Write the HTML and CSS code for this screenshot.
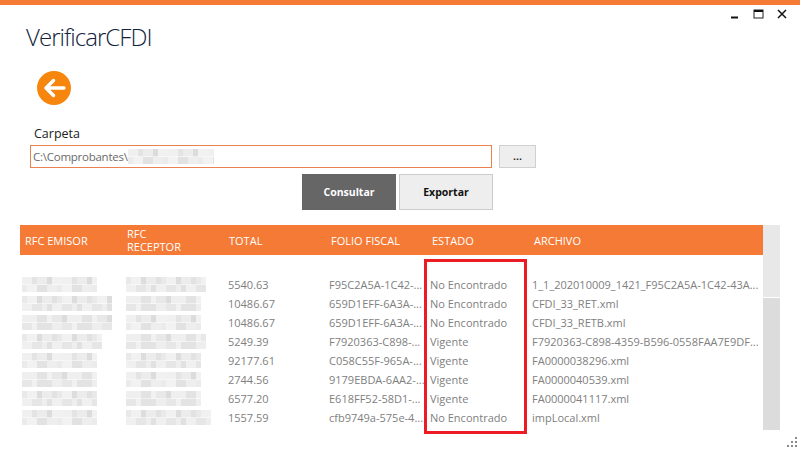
FILE: index.html
```html
<!DOCTYPE html>
<html lang="es">
<head>
<meta charset="utf-8">
<title>VerificarCFDI</title>
<link rel="stylesheet" href="styles.css">
</head>
<body>
<div class="window">
  <div class="topbar"></div>
  <div class="controls">
    <svg class="ctl" width="10" height="10" viewBox="0 0 10 10"><path d="M1 8.500h7" stroke="#111" stroke-width="2" fill="none"/></svg>
    <svg class="ctl" width="11" height="10" viewBox="0 0 11 10"><rect x="1" y="1" width="9" height="8" fill="none" stroke="#222" stroke-width="1"/><path d="M1 2h9" stroke="#111" stroke-width="2"/></svg>
    <svg class="ctl" width="10" height="10" viewBox="0 0 10 10"><path d="M1 1l8 8M9 1l-8 8" stroke="#111" stroke-width="1.500" fill="none"/></svg>
  </div>
  <h1 class="title">VerificarCFDI</h1>
  <button class="back" type="button" aria-label="Volver">
    <svg width="34" height="34" viewBox="0 0 34 34"><circle cx="17" cy="17" r="17" fill="#f7860e"/><path d="M27 17H9M16.500 9.500L9 17l7.500 7.500" fill="none" stroke="#fff" stroke-width="3.400" stroke-linecap="round" stroke-linejoin="round"/></svg>
  </button>
  <div class="label">Carpeta</div>
  <div class="path-row">
    <div class="path-input"><span>C:\Comprobantes\</span><i class="blur blur-a w-path"></i></div>
    <button class="browse" type="button">...</button>
  </div>
  <div class="actions">
    <button class="btn btn-dark" type="button">Consultar</button>
    <button class="btn btn-light" type="button">Exportar</button>
  </div>
  <div class="table-wrap">
    <div class="table">
      <div class="thead">
        <div>RFC EMISOR</div><div>RFC<br>RECEPTOR</div><div>TOTAL</div><div>FOLIO FISCAL</div><div>ESTADO</div><div>ARCHIVO</div>
      </div>
      <div class="tbody">
        <div class="row"><i class="blur blur-a w75"></i><i class="blur blur-b w80"></i><span>5540.63</span><span>F95C2A5A-1C42-...</span><span>No Encontrado</span><span>1_1_202010009_1421_F95C2A5A-1C42-43A...</span></div>
        <div class="row"><i class="blur blur-b w90"></i><i class="blur blur-c w75"></i><span>10486.67</span><span>659D1EFF-6A3A-...</span><span>No Encontrado</span><span>CFDI_33_RET.xml</span></div>
        <div class="row"><i class="blur blur-c w90"></i><i class="blur blur-a w75"></i><span>10486.67</span><span>659D1EFF-6A3A-...</span><span>No Encontrado</span><span>CFDI_33_RETB.xml</span></div>
        <div class="row"><i class="blur blur-b w80"></i><i class="blur blur-c w80"></i><span>5249.39</span><span>F7920363-C898-...</span><span>Vigente</span><span>F7920363-C898-4359-B596-0558FAA7E9DF...</span></div>
        <div class="row"><i class="blur blur-a w75"></i><i class="blur blur-b w75"></i><span>92177.61</span><span>C058C55F-965A-...</span><span>Vigente</span><span>FA0000038296.xml</span></div>
        <div class="row"><i class="blur blur-c w75"></i><i class="blur blur-a w75"></i><span>2744.56</span><span>9179EBDA-6AA2-...</span><span>Vigente</span><span>FA0000040539.xml</span></div>
        <div class="row"><i class="blur blur-b w75"></i><i class="blur blur-c w75"></i><span>6577.20</span><span>E618FF52-58D1-...</span><span>Vigente</span><span>FA0000041117.xml</span></div>
        <div class="row"><i class="blur blur-a w75"></i><i class="blur blur-b w85"></i><span>1557.59</span><span>cfb9749a-575e-4...</span><span>No Encontrado</span><span>impLocal.xml</span></div>
      </div>
    </div>
    <div class="scrollbar"><div class="track"></div><div class="thumb"></div></div>
  </div>
  <div class="highlight"></div>
  <svg class="grip" width="12" height="10" viewBox="0 0 12 10"><path d="M9 0h2v2H9zM5 4h2v2H5zM9 4h2v2H9zM1 8h2v2H1zM5 8h2v2H5zM9 8h2v2H9z" fill="#8a8a8a"/></svg>
</div>
</body>
</html>
```
FILE: styles.css
```css
* { box-sizing: border-box; }
html, body { margin: 0; height: 100%; }
body { background: #fff; font-family: "Open Sans", "Noto Sans", sans-serif; overflow: hidden; }
.window { position: relative; width: 800px; height: 450px; }
.topbar { height: 5px; background: #f57a35; }
.controls { position: absolute; top: 9px; right: 13px; display: flex; gap: 13px; align-items: center; }
.ctl { display: block; }
.title { margin: 14px 0 0 26px; height: 36px; font-size: 24px; line-height: 36px; font-weight: 300; color: #12233a; letter-spacing: -0.95px; }
.back { display: block; margin: 16px 0 0 37px; padding: 0; width: 34px; height: 34px; border: 0; background: none; }
.back svg { display: block; }
.label { margin: 19px 0 0 34px; height: 21px; font-size: 12.500px; line-height: 20px; color: #222; }
.path-row { display: flex; gap: 7px; margin-left: 30px; }
.path-input { display: flex; align-items: center; width: 462px; height: 23px; padding-left: 2px; border: 1px solid #ea8150; font-size: 11.500px; color: #6a6a6a; letter-spacing: -0.25px; }
.browse { width: 37px; height: 23px; padding: 0 0 2px; border: 1px solid #d0d0d0; background: #eee; font: 600 11px "Open Sans", sans-serif; color: #111; }
.actions { display: flex; gap: 3px; margin: 6px 0 0 302px; }
.btn { width: 94px; height: 36px; padding: 0; font: 700 10.500px "Open Sans", sans-serif; }
.btn-dark { border: 0; background: #666; color: #fff; }
.btn-light { border: 1px solid #ccc; background: #eee; color: #111; }
.table-wrap { display: flex; margin: 15px 0 0 20px; width: 760px; }
.table { width: 743px; }
.thead { display: grid; grid-template-columns: 102px 102px 102px 101px 102px 1fr; align-items: center; height: 30px; padding-left: 5px; background: #f57a35; color: #fff; font-size: 11px; line-height: 13px; }
.tbody { padding-top: 20px; }
.row { display: grid; grid-template-columns: 104px 102px 101px 101px 102px 1fr; align-items: center; height: 19px; padding-left: 2px; font-size: 11px; color: #808080; white-space: nowrap; }
.scrollbar { display: flex; flex-direction: column; width: 17px; }
.track { height: 72px; background: #e8e8e8; }
.thumb { height: 132px; margin-top: 1px; background: #dcdcdc; }
.blur { display: block; height: 15px; background-repeat: no-repeat; background-size: 100% 50%; background-position: 0 0, 0 100%; }
.blur-a { background-image:
  repeating-linear-gradient(90deg, #f0f0f0 0 10px, #e4e4e4 10px 15px, #ececec 15px 25px, #dcdcdc 25px 30px, #f1f1f1 30px 40px),
  repeating-linear-gradient(90deg, #ebebeb 0 5px, #f2f2f2 5px 15px, #e2e2e2 15px 25px, #eeeeee 25px 35px); }
.blur-b { background-image:
  repeating-linear-gradient(90deg, #e9e9e9 0 5px, #f1f1f1 5px 15px, #dddddd 15px 20px, #ececec 20px 30px, #e2e2e2 30px 35px),
  repeating-linear-gradient(90deg, #f0f0f0 0 10px, #e6e6e6 10px 20px, #eeeeee 20px 25px, #e1e1e1 25px 30px); }
.blur-c { background-image:
  repeating-linear-gradient(90deg, #efefef 0 15px, #e3e3e3 15px 25px, #f1f1f1 25px 30px, #e8e8e8 30px 40px, #dcdcdc 40px 45px),
  repeating-linear-gradient(90deg, #e7e7e7 0 10px, #f1f1f1 10px 15px, #e3e3e3 15px 30px, #eeeeee 30px 40px); }
.w75 { width: 75px; }
.w80 { width: 80px; }
.w85 { width: 85px; }
.w90 { width: 90px; }
.w-path { width: 86px; }
.highlight { position: absolute; left: 424px; top: 259px; width: 103px; height: 175px; border: 3px solid #ed1c24; }
.grip { position: absolute; left: 786px; top: 437px; }
```
